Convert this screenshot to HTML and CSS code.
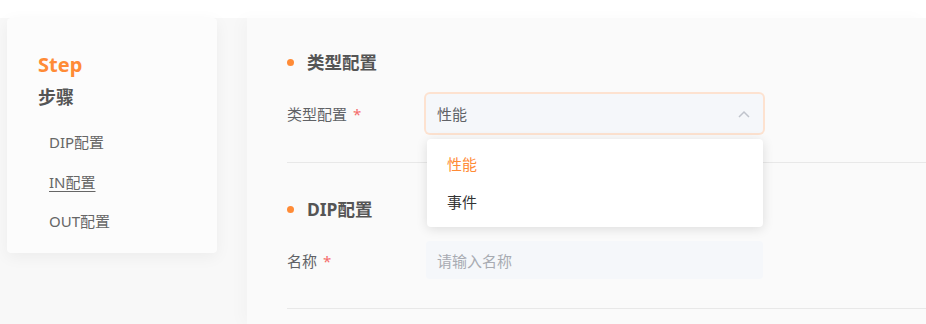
FILE: index.html
```html
<!DOCTYPE html>
<html lang="zh">
<head>
<meta charset="utf-8">
<title>配置</title>
<link rel="stylesheet" href="styles.css">
</head>
<body>
<div class="topbar"></div>
<div class="layout">
  <aside class="aside">
    <div class="steps">
      <div class="steps-title">Step</div>
      <div class="steps-sub">步骤</div>
      <ul class="steps-list">
        <li class="step">DIP配置</li>
        <li class="step step-active">IN配置</li>
        <li class="step">OUT配置</li>
      </ul>
    </div>
  </aside>
  <main class="main">
    <section class="section">
      <h2 class="section-title"><span class="dot"></span>类型配置</h2>
      <div class="form-row">
        <label class="form-label">类型配置 <span class="req">*</span></label>
        <div class="control">
          <div class="select is-open">
            <span class="select-value">性能</span>
            <svg class="chevron" width="12" height="8" viewBox="0 0 12 8"><path d="M1 7 L6 2 L11 7" fill="none" stroke="#c0c4cc" stroke-width="1.5"/></svg>
          </div>
          <ul class="dropdown">
            <li class="option option-selected">性能</li>
            <li class="option">事件</li>
          </ul>
        </div>
      </div>
    </section>
    <section class="section">
      <h2 class="section-title"><span class="dot"></span>DIP配置</h2>
      <div class="form-row">
        <label class="form-label">名称 <span class="req">*</span></label>
        <div class="control">
          <div class="input"><span class="placeholder">请输入名称</span></div>
        </div>
      </div>
    </section>
  </main>
</div>
</body>
</html>
```

FILE: styles.css
```css
* { box-sizing: border-box; }
html, body { margin: 0; padding: 0; }
body {
  width: 926px;
  height: 324px;
  overflow: hidden;
  background: #ffffff;
  font-family: "Noto Sans", "Noto Sans CJK SC", sans-serif;
  color: #606266;
}
.topbar {
  height: 18px;
  background: #ffffff;
}
.layout {
  display: flex;
  height: 306px;
  background: #f6f6f6;
}
.aside {
  width: 247px;
  flex: none;
  padding-left: 7px;
  background: #f8f8f8;
}
.steps {
  width: 210px;
  height: 235px;
  background: #fcfcfc;
  border-radius: 4px;
  box-shadow: 0 4px 16px rgba(0, 0, 0, 0.05);
  padding: 33px 0 0 31px;
}
.steps-title {
  font-size: 20px;
  font-weight: 700;
  color: #ff8b36;
  line-height: 28px;
}
.steps-sub {
  font-size: 18px;
  font-weight: 700;
  color: #555555;
  line-height: 24px;
  margin-top: 6px;
}
.steps-list {
  list-style: none;
  margin: 23px 0 0 0;
  padding: 0 0 0 11px;
}
.step {
  font-size: 15px;
  color: #666666;
  line-height: 20px;
  margin-bottom: 19.5px;
}
.step-active {
  text-decoration: underline;
  text-underline-offset: 3px;
}
.main {
  flex: 1;
  background: #fafafa;
  padding-left: 40px;
  box-shadow: -6px 0 14px rgba(0, 0, 0, 0.025);
}
.section {
  padding: 34px 0 29px 0;
  border-bottom: 1px solid #e8e8e8;
}
.section:first-child {
  padding-top: 32px;
}
.section-title {
  margin: 0 0 20px 0;
  display: flex;
  align-items: center;
  font-size: 17.5px;
  font-weight: 700;
  color: #555555;
  line-height: 24px;
}
.dot {
  width: 7px;
  height: 7px;
  border-radius: 50%;
  background: #ff8b36;
  margin: 0 13px 0 0;
}
.form-row {
  display: flex;
  align-items: center;
}
.form-label {
  width: 139px;
  flex: none;
  font-size: 15px;
  color: #606266;
}
.req {
  color: #f56c6c;
  margin-left: 2px;
}
.control {
  position: relative;
  width: 337px;
}
.select, .input {
  height: 39px;
  background: #f5f7fa;
  border-radius: 4px;
  display: flex;
  align-items: center;
  padding: 0 13px 0 11px;
  font-size: 15px;
}
.input {
  height: 38px;
}
.select.is-open {
  box-shadow: 0 0 0 2px #fde2d0;
}
.select-value {
  flex: 1;
  color: #606266;
}
.placeholder {
  color: #a8abb2;
}
.dropdown {
  position: absolute;
  left: 1px;
  right: 0;
  top: 45px;
  margin: 0;
  padding: 6px 0;
  list-style: none;
  background: #ffffff;
  border-radius: 4px;
  box-shadow: 0 2px 12px rgba(0, 0, 0, 0.12);
  z-index: 10;
}
.option {
  height: 38px;
  line-height: 38px;
  padding-left: 20px;
  font-size: 15px;
  color: #333333;
}
.option-selected {
  color: #ff8b36;
}
```
